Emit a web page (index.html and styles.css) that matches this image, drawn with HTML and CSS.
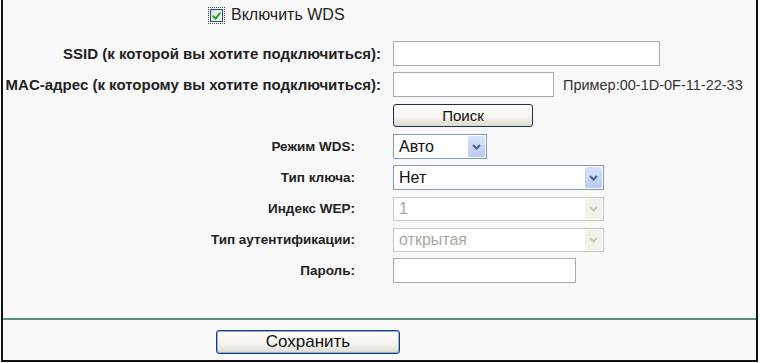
FILE: index.html
```html
<!DOCTYPE html>
<html lang="ru">
<head>
    <meta charset="UTF-8">
    <title>WDS</title>
    <link rel="stylesheet" href="styles.css">
</head>
<body>
    <div class="frame">
        <div class="wds-toggle">
            <span class="focus-ring"><span class="checkbox checked"></span></span>
            <span>Включить WDS</span>
        </div>

        <div class="row">
            <label class="lbl lbl-long">SSID (к которой вы хотите подключиться):</label>
            <div class="ctl"><input type="text" class="txt txt-ssid"></div>
        </div>
        <div class="row">
            <label class="lbl lbl-long">MAC-адрес (к которому вы хотите подключиться):</label>
            <div class="ctl">
                <input type="text" class="txt txt-mac">
                <span class="hint">Пример:00-1D-0F-11-22-33</span>
            </div>
        </div>
        <div class="row">
            <span class="lbl"></span>
            <div class="ctl"><button class="btn btn-search">Поиск</button></div>
        </div>
        <div class="row">
            <label class="lbl">Режим WDS:</label>
            <div class="ctl">
                <div class="sel sel-mode">
                    <span class="sel-val">Авто</span>
                    <span class="sel-arrow"><svg width="9" height="6" viewBox="0 0 9 6"><path d="M1 1l3.5 3.5L8 1" fill="none" stroke="#4d6185" stroke-width="2"/></svg></span>
                </div>
            </div>
        </div>
        <div class="row">
            <label class="lbl">Тип ключа:</label>
            <div class="ctl">
                <div class="sel sel-wide">
                    <span class="sel-val">Нет</span>
                    <span class="sel-arrow"><svg width="9" height="6" viewBox="0 0 9 6"><path d="M1 1l3.5 3.5L8 1" fill="none" stroke="#4d6185" stroke-width="2"/></svg></span>
                </div>
            </div>
        </div>
        <div class="row">
            <label class="lbl">Индекс WEP:</label>
            <div class="ctl">
                <div class="sel sel-wide disabled">
                    <span class="sel-val">1</span>
                    <span class="sel-arrow"><svg width="9" height="6" viewBox="0 0 9 6"><path d="M1 1l3.5 3.5L8 1" fill="none" stroke="#c9c7ba" stroke-width="2"/></svg></span>
                </div>
            </div>
        </div>
        <div class="row">
            <label class="lbl">Тип аутентификации:</label>
            <div class="ctl">
                <div class="sel sel-wide disabled">
                    <span class="sel-val">открытая</span>
                    <span class="sel-arrow"><svg width="9" height="6" viewBox="0 0 9 6"><path d="M1 1l3.5 3.5L8 1" fill="none" stroke="#c9c7ba" stroke-width="2"/></svg></span>
                </div>
            </div>
        </div>
        <div class="row">
            <label class="lbl">Пароль:</label>
            <div class="ctl"><input type="text" class="txt txt-pass"></div>
        </div>

        <div class="divider"></div>

        <div class="save-row">
            <button class="btn btn-save">Сохранить</button>
        </div>
    </div>
</body>
</html>
```

FILE: styles.css
```css
body {
    margin: 0;
    background: #fff;
    font-family: 'Liberation Sans', Arial, sans-serif;
    font-size: 14px;
    color: #000;
}

.frame {
    margin-left: 1px;
    width: 757px;
    height: 362px;
    box-sizing: border-box;
    border: 2px solid #111;
    border-top: none;
    background: #f9f9f9;
}

.wds-toggle {
    display: flex;
    align-items: center;
    gap: 6px;
    height: 30px;
    margin-bottom: 8px;
    padding-left: 205px;
    font-size: 16px;
    color: #222;
}

.focus-ring {
    display: inline-flex;
    padding: 1px;
    border: 1px dotted #444;
}

.checkbox {
    width: 11px;
    height: 11px;
    border: 1px solid #1c5180;
    background: linear-gradient(135deg, #dcdcd7, #fff);
    position: relative;
}

.checkbox.checked::after {
    content: "";
    position: absolute;
    left: 3px;
    top: 1px;
    width: 3px;
    height: 6px;
    border: solid #21a121;
    border-width: 0 2px 2px 0;
    transform: rotate(40deg);
}

.row {
    display: grid;
    grid-template-columns: 378px 1fr;
    column-gap: 12px;
    align-items: center;
    height: 31px;
}

.lbl {
    text-align: right;
    padding-right: 26px;
    font-weight: bold;
    font-size: 13.5px;
    color: #222;
}

.lbl-long {
    padding-right: 0;
    font-size: 15px;
}

.ctl {
    display: flex;
    align-items: center;
    gap: 9px;
}

.txt {
    box-sizing: border-box;
    height: 25px;
    border: 1px solid #a5acb5;
    background: #fff;
    padding: 0 3px;
    margin: 0;
    font: 15px 'Liberation Sans', Arial, sans-serif;
}

.txt-ssid { width: 267px; }
.txt-mac { width: 161px; }
.txt-pass { width: 183px; }

.hint {
    font-size: 14.5px;
    color: #333;
}

.btn {
    box-sizing: border-box;
    border: 1px solid #1a2f5a;
    border-radius: 3px;
    background: linear-gradient(#fff, #f4f3ee 60%, #dcd9ce);
    font: 15px 'Liberation Sans', Arial, sans-serif;
    color: #111;
    padding: 0;
    margin: 0;
}

.btn-search {
    width: 140px;
    height: 23px;
}

.sel {
    box-sizing: border-box;
    height: 25px;
    border: 1px solid #7f9db9;
    background: #fff;
    display: flex;
    align-items: center;
    justify-content: space-between;
    padding-left: 5px;
    font-size: 16px;
    color: #111;
}

.sel-mode { width: 94px; }
.sel-wide { width: 211px; }

.sel-arrow {
    width: 17px;
    height: 21px;
    margin-right: 1px;
    background: linear-gradient(#d8e4fb, #b7caf3);
    border-radius: 2px;
    display: flex;
    align-items: center;
    justify-content: center;
}

.sel.disabled {
    height: 24px;
    border-color: #c9c7ba;
    color: #aca899;
}

.sel.disabled .sel-arrow {
    height: 20px;
    background: #f2f1ec;
}

.divider {
    margin-top: 32px;
    height: 2px;
    background: #5f8d7d;
}

.save-row {
    padding: 10px 0 0 213px;
}

.btn-save {
    width: 184px;
    height: 24px;
    border: 1px solid #1d3d7a;
    box-shadow: inset 0 0 0 1px #8ab0ea;
    font-size: 17px;
}
```
